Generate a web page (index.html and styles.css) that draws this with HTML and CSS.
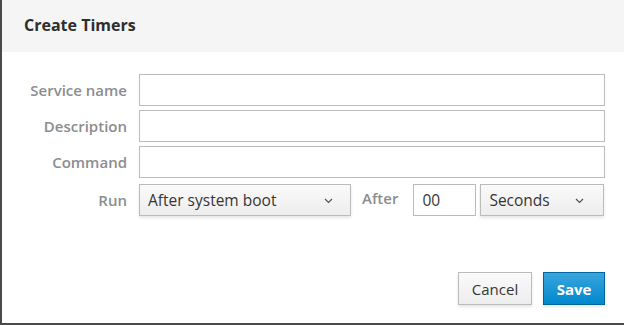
FILE: index.html
```html
<!DOCTYPE html>
<html>
<head>
<meta charset="utf-8">
<link rel="stylesheet" href="styles.css">
</head>
<body>
<div class="modal">
  <div class="modal-header"><h4 class="modal-title">Create Timers</h4></div>
  <div class="modal-body">
    <div class="form-grid">
      <label class="control-label">Service name</label>
      <div class="form-control"></div>
      <label class="control-label">Description</label>
      <div class="form-control"></div>
      <label class="control-label">Command</label>
      <div class="form-control"></div>
      <label class="control-label run-label">Run</label>
      <div class="run-row">
        <div class="select select-run"><span>After system boot</span><svg class="caret" width="9" height="6" viewBox="0 0 9 6"><path d="M1 1 L4.5 4.5 L8 1" fill="none" stroke="#4d5258" stroke-width="1.2"/></svg></div>
        <span class="control-label after-label">After</span>
        <div class="form-control time-input">00</div>
        <div class="select select-unit"><span>Seconds</span><svg class="caret" width="9" height="6" viewBox="0 0 9 6"><path d="M1 1 L4.5 4.5 L8 1" fill="none" stroke="#4d5258" stroke-width="1.2"/></svg></div>
      </div>
    </div>
  </div>
  <div class="modal-footer">
    <div class="btn btn-default">Cancel</div>
    <div class="btn btn-primary">Save</div>
  </div>
</div>
</body>
</html>
```

FILE: styles.css
```css
* { box-sizing: border-box; }
html, body { margin: 0; padding: 0; background: #fff; }
body { font-family: "Open Sans", "Noto Sans", sans-serif; color: #363636; }
.modal {
  width: 624px;
  height: 325px;
  border-left: 2px solid #4a4a4a;
  border-bottom: 2px solid #4a4a4a;
  display: flex;
  flex-direction: column;
  background: #fff;
}
.modal-header {
  height: 52px;
  background: #f5f5f5;
  padding-left: 22px;
  display: flex;
  align-items: center;
}
.modal-title {
  margin: 0;
  font-size: 16px;
  font-weight: 700;
  color: #2e2e2e;
  position: relative;
  top: -1px;
}
.modal-body {
  padding: 22px 19px 0 0;
}
.form-grid {
  display: grid;
  grid-template-columns: 125px 1fr;
  column-gap: 12px;
  row-gap: 4px;
  align-items: center;
}
.control-label {
  text-align: right;
  font-size: 15px;
  font-weight: 600;
  color: #8b8d8f;
}
.form-control {
  height: 32px;
  border: 1px solid #bbb;
  background: #fff;
  font-size: 15.5px;
  color: #363636;
  padding: 0 8px;
  display: flex;
  align-items: center;
}
.run-label, .run-row { margin-top: 2px; }
.run-row {
  display: flex;
  align-items: center;
}
.select {
  height: 32px;
  border: 1px solid #bbb;
  background: linear-gradient(#fafafa, #ededed);
  box-shadow: 0 2px 3px rgba(3, 3, 3, 0.1);
  font-size: 15.5px;
  color: #363636;
  display: flex;
  align-items: center;
  justify-content: space-between;
  padding: 0 17px 0 8px;
}
.select-run { width: 212px; }
.after-label { margin-left: 11px; margin-right: 15px; position: relative; top: -2px; }
.time-input { width: 63px; }
.select-unit { width: 124px; margin-left: 4px; padding-right: 19px; }
.caret { display: block; margin-top: 2px; }
.modal-footer {
  margin-top: auto;
  padding: 0 19px 18px 0;
  display: flex;
  justify-content: flex-end;
  gap: 11px;
}
.btn {
  height: 33px;
  font-size: 15px;
  display: flex;
  align-items: center;
  justify-content: center;
  border: 1px solid #bbb;
  box-shadow: 0 2px 3px rgba(3, 3, 3, 0.1);
}
.btn-default {
  width: 74px;
  background: linear-gradient(#fafafa, #ededed);
  color: #363636;
}
.btn-primary {
  width: 62px;
  background: linear-gradient(#39a5dc, #0088ce);
  border-color: #00659c;
  color: #fff;
  font-weight: 700;
}
```
